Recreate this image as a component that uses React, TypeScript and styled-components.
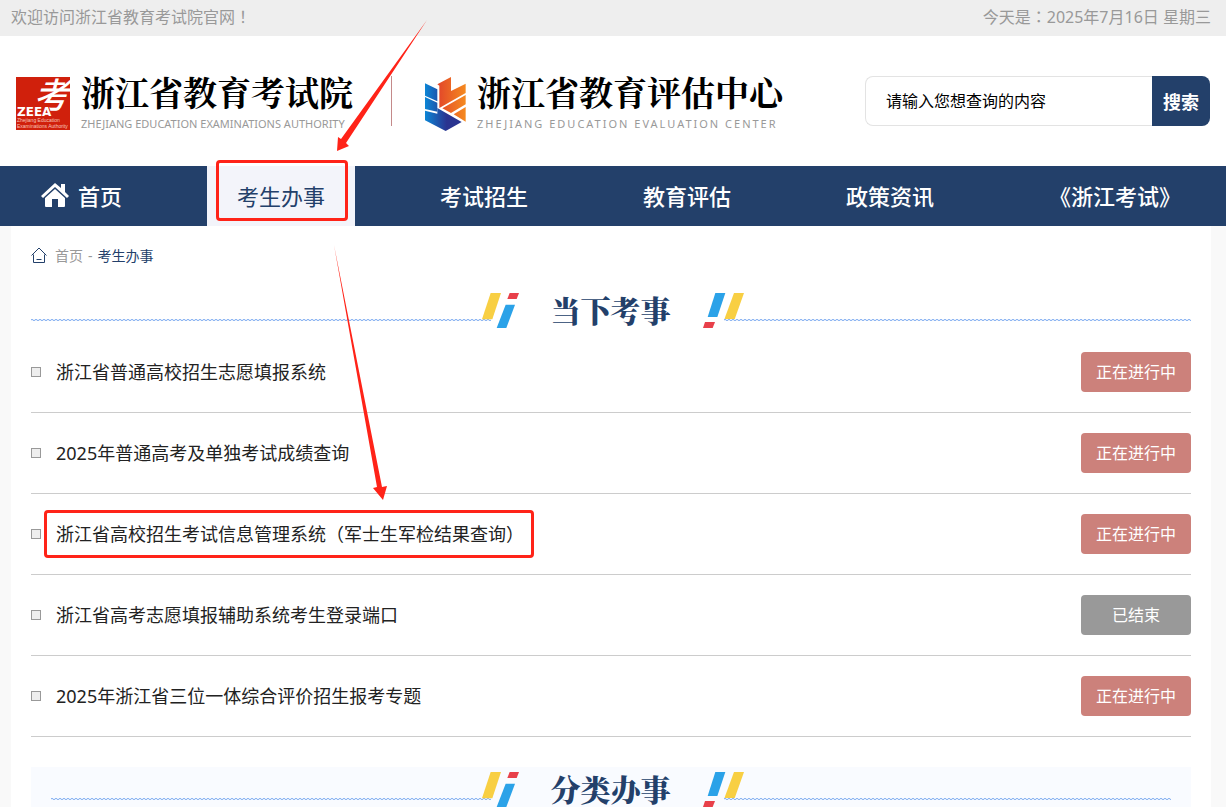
import React from "react";
import styled, { createGlobalStyle } from "styled-components";

const navy = "#23406a";
const sans = `"Noto Sans", "Noto Sans CJK SC", sans-serif`;
const serif = `"Noto Serif CJK SC", "Source Han Serif SC", "Liberation Serif", "Noto Sans CJK SC", serif`;

const GlobalStyle = createGlobalStyle`
  * { box-sizing: border-box; }
  body { margin: 0; background: #f9f9f9; font-family: ${sans}; font-size: 16px; color: #222; }
  a { color: inherit; text-decoration: none; }
  h1, h2, p, ul { margin: 0; padding: 0; font-weight: inherit; }
  ul { list-style: none; }
  button, input { font-family: inherit; }
`;

const Page = styled.div`
  position: relative;
  height: 100vh;
  overflow: hidden;
`;

const TopBar = styled.div`
  display: flex;
  justify-content: space-between;
  align-items: center;
  height: 36px;
  padding: 0 15px 4px 11px;
  background: #eee;
  color: #999;
`;

const Punct = styled.span`
  font-family: "Noto Sans CJK TC", sans-serif;
  line-height: 1;
`;

const Header = styled.header`
  display: flex;
  align-items: flex-start;
  padding: 40px 16px;
  height: 130px;
  background: #fff;
`;

const Brand = styled.a`
  display: flex;
  gap: 11px;
`;

const BrandText = styled.div`
  display: flex;
  flex-direction: column;
`;

const BrandName = styled.span`
  font-family: ${serif};
  font-size: 34px;
  font-weight: 700;
  line-height: 32px;
  color: #000;
  white-space: nowrap;
`;

const BrandSub = styled.span<{ $tracked?: boolean }>`
  font-size: 11px;
  line-height: 32px;
  letter-spacing: ${(p) => (p.$tracked ? "2px" : "normal")};
  color: #999;
  white-space: nowrap;
`;

const Divider = styled.div`
  width: 1px;
  height: 50px;
  margin: 0 33px 0 38px;
  background: #c48a8a;
`;

const SearchForm = styled.form`
  display: flex;
  width: 345px;
  height: 50px;
  margin-left: auto;
`;

const SearchInput = styled.input`
  flex: 1;
  min-width: 0;
  padding: 0 20px;
  border: 1px solid #e3e3e3;
  border-right: 0;
  border-radius: 8px 0 0 8px;
  background: #fff;
  font-size: 16px;
  outline: none;
  &::placeholder { color: #000; opacity: 1; }
`;

const SearchButton = styled.button`
  width: 58px;
  padding: 0;
  border: 0;
  border-radius: 0 8px 8px 0;
  background: ${navy};
  color: #fff;
  font-size: 18px;
  font-weight: 700;
`;

const Nav = styled.nav`
  display: flex;
  justify-content: space-between;
  height: 60px;
  padding: 0 15px 0 11px;
  background: ${navy};
`;

const NavLink = styled.a<{ $active?: boolean }>`
  position: relative;
  display: flex;
  align-items: center;
  gap: 9px;
  padding: 0 30px 3px;
  background: ${(p) => (p.$active ? "#f3f4fa" : "transparent")};
  color: ${(p) => (p.$active ? navy : "#fff")};
  font-size: 22px;
  font-weight: ${(p) => (p.$active ? 400 : 500)};
  white-space: nowrap;
`;

const Main = styled.main`
  margin: 0 15px 0 11px;
  padding: 0 20px;
  background: #fff;
`;

const Crumbs = styled.nav`
  display: flex;
  align-items: center;
  gap: 5px;
  height: 58px;
  font-size: 14px;
  color: #999;
  svg { margin-right: 3px; }
`;

const CurrentCrumb = styled.a`
  color: ${navy};
`;

const TitleBar = styled.div`
  display: flex;
  align-items: flex-start;
  height: 35px;
`;

const Wave = styled.div<{ $side: "left" | "right" }>`
  flex: 1 1 ${(p) => (p.$side === "left" ? "0px" : "8px")};
  height: 2px;
  margin-top: 26px;
  margin-right: ${(p) => (p.$side === "left" ? "-9px" : "0")};
  margin-left: ${(p) => (p.$side === "right" ? "-20px" : "0")};
  background:
    repeating-linear-gradient(90deg, #8fb6f2 0 2px, #e4eefc 2px 4px) 0 0 / 100% 1px no-repeat,
    repeating-linear-gradient(90deg, #e4eefc 0 2px, #8fb6f2 2px 4px) 0 1px / 100% 1px no-repeat;
`;

const TitleText = styled.h2`
  margin: 0 32px;
  font-family: ${serif};
  font-size: 30px;
  font-weight: 900;
  line-height: 33px;
  color: ${navy};
  white-space: nowrap;
`;

const Current = styled.section`
  padding-top: 9px;
`;

const List = styled.ul`
  && { margin-top: 4px; }
`;

const Row = styled.li`
  display: flex;
  align-items: center;
  height: 81px;
  border-bottom: 1px solid #ccc;
`;

const Bullet = styled.span`
  width: 10px;
  height: 10px;
  margin-right: 15px;
  border: 1px solid #999;
  background: #eee;
`;

const RowLink = styled.a`
  position: relative;
  padding-bottom: 2px;
  font-size: 18px;
  color: #222;
`;

const Status = styled.a<{ $ended?: boolean }>`
  width: 110px;
  margin-left: auto;
  border-radius: 4px;
  background: ${(p) => (p.$ended ? "#999" : "#cc817b")};
  color: #fff;
  line-height: 40px;
  text-align: center;
`;

const Category = styled.section`
  margin-top: 30px;
  padding: 5px 20px 40px;
  background: #f9fbff;
`;

const Highlight = styled.span<{ $inset: string }>`
  position: absolute;
  inset: ${(p) => p.$inset};
  border: 3px solid #ff2318;
  border-radius: 4px;
  pointer-events: none;
`;

const Arrows = styled.svg`
  position: absolute;
  top: 0;
  left: 0;
  pointer-events: none;
`;

const AuthorityLogo = () => (
  <svg width="54" height="54" viewBox="0 0 54 54" aria-hidden="true">
    <rect y="1" width="54" height="53" fill="#d0200c" />
    <text x="18" y="32" fontSize="35" fontWeight="500" fontStyle="italic" fill="#fff" fontFamily={sans}>考</text>
    <text x="1" y="40" fontSize="12" fontWeight="700" fill="#fff" stroke="#d0200c" strokeWidth="2" paintOrder="stroke" fontFamily={`"DejaVu Sans", sans-serif`}>ZEEA</text>
    <text x="1" y="46" fontSize="5" fontWeight="400" fill="#f7c5ba" fontFamily={`"Liberation Sans", sans-serif`}>Zhejiang Education</text>
    <text x="1" y="52" fontSize="5" fontWeight="400" fill="#f7c5ba" fontFamily={`"Liberation Sans", sans-serif`}>Examinations Authority</text>
  </svg>
);

const CenterLogo = () => (
  <svg width="41" height="55" viewBox="135 47 123 165" aria-hidden="true">
    <defs>
      <linearGradient id="orange" gradientUnits="userSpaceOnUse" x1="172" y1="0" x2="257" y2="0">
        <stop offset="0" stopColor="#e2452a" />
        <stop offset="1" stopColor="#f58a1f" />
      </linearGradient>
      <linearGradient id="blue" gradientUnits="userSpaceOnUse" x1="135" y1="0" x2="200" y2="0">
        <stop offset="0" stopColor="#0b86d6" />
        <stop offset="1" stopColor="#2a3490" />
      </linearGradient>
    </defs>
    <path d="M135 69l37 18v36l-37-17zM135 110l37 17v27l-37-8z" fill="url(#blue)" />
    <path d="M135 151l37 9v-17l73 42-48 27-62-32z" fill="url(#blue)" />
    <path d="M172 72l41-22v42l44-22v28l-79 45V76zM187 144l70-40v28l-44 26zM221 162l36-22v44z" fill="url(#orange)" />
  </svg>
);

const HomeSolid = () => (
  <svg width="28" height="26" viewBox="0 0 28 26" fill="#fff" aria-hidden="true">
    <path d="M14 1L0 14l2 2L14 5l12 11 2-2-4-4V2h-4v4z" />
    <path d="M14 7L4 16v8q0 1 1 1h6v-8h6v8h6q1 0 1-1v-8z" />
  </svg>
);

const HomeOutline = () => (
  <svg width="16" height="17" viewBox="0 0 16 17" fill="none" stroke={navy} aria-hidden="true">
    <path d="M.5 8.5L8 1l7.500 7.500M2.500 7.500v8h11v-8M5.500 12.500h5" />
  </svg>
);

const SlashLeft = () => (
  <svg width="37" height="35" viewBox="66 39 111 105" aria-hidden="true">
    <path d="M92 39h31l-26 79H66z" fill="#f8cf43" />
    <path d="M149 39h28l-7 18h-28z" fill="#e8404a" />
    <path d="M137 74h28l-26 70h-29z" fill="#2ba2e8" />
  </svg>
);

const SlashRight = () => (
  <svg width="41" height="35" viewBox="729 39 123 105" aria-hidden="true">
    <path d="M766 39h30l-24 72h-29z" fill="#2ba2e8" />
    <path d="M822 39h30l-28 79h-31z" fill="#f8cf43" />
    <path d="M735 126h30l-7 18h-29z" fill="#e8404a" />
  </svg>
);

const SectionTitle = ({ children }: { children: string }) => (
  <TitleBar>
    <Wave $side="left" />
    <SlashLeft />
    <TitleText>{children}</TitleText>
    <SlashRight />
    <Wave $side="right" />
  </TitleBar>
);

const navItems = ["考试招生", "教育评估", "政策资讯", "《浙江考试》"];

const rows: { title: string; ended?: boolean; marked?: boolean }[] = [
  { title: "浙江省普通高校招生志愿填报系统" },
  { title: "2025年普通高考及单独考试成绩查询" },
  { title: "浙江省高校招生考试信息管理系统（军士生军检结果查询）", marked: true },
  { title: "浙江省高考志愿填报辅助系统考生登录端口", ended: true },
  { title: "2025年浙江省三位一体综合评价招生报考专题" },
];

export default function App() {
  return (
    <Page>
      <GlobalStyle />
      <TopBar>
        <p>欢迎访问浙江省教育考试院官网<Punct>！</Punct></p>
        <p>今天是<Punct>：</Punct>2025年7月16日 星期三</p>
      </TopBar>
      <Header>
        <Brand href="#">
          <AuthorityLogo />
          <BrandText>
            <BrandName>浙江省教育考试院</BrandName>
            <BrandSub>ZHEJIANG EDUCATION EXAMINATIONS AUTHORITY</BrandSub>
          </BrandText>
        </Brand>
        <Divider />
        <Brand href="#">
          <CenterLogo />
          <BrandText>
            <BrandName>浙江省教育评估中心</BrandName>
            <BrandSub $tracked>ZHEJIANG EDUCATION EVALUATION CENTER</BrandSub>
          </BrandText>
        </Brand>
        <SearchForm>
          <SearchInput type="text" aria-label="搜索内容" placeholder="请输入您想查询的内容" />
          <SearchButton type="button">搜索</SearchButton>
        </SearchForm>
      </Header>
      <Nav>
        <NavLink href="#">
          <HomeSolid />
          首页
        </NavLink>
        <NavLink href="#" $active>
          考生办事
          <Highlight $inset="-6px 7px 5px 9px" />
        </NavLink>
        {navItems.map((item) => (
          <NavLink href="#" key={item}>{item}</NavLink>
        ))}
      </Nav>
      <Main>
        <Crumbs>
          <HomeOutline />
          <a href="#">首页</a>
          <span>-</span>
          <CurrentCrumb href="#">考生办事</CurrentCrumb>
        </Crumbs>
        <Current>
          <SectionTitle>当下考事</SectionTitle>
          <List>
            {rows.map((row) => (
              <Row key={row.title}>
                <Bullet />
                <RowLink href="#">
                  {row.title}
                  {row.marked && <Highlight $inset="-10px -10px -10px -12px" />}
                </RowLink>
                <Status href="#" $ended={row.ended}>{row.ended ? "已结束" : "正在进行中"}</Status>
              </Row>
            ))}
          </List>
        </Current>
        <Category>
          <SectionTitle>分类办事</SectionTitle>
        </Category>
      </Main>
      <Arrows width="600" height="510" viewBox="0 0 600 510" fill="#ff2318" aria-hidden="true">
        <path d="M427 20L346 143l3 3-12 5 1-14 3 2z" />
        <path d="M334 245L382 487l5-1-4 14-10-12 4-1z" />
      </Arrows>
    </Page>
  );
}
